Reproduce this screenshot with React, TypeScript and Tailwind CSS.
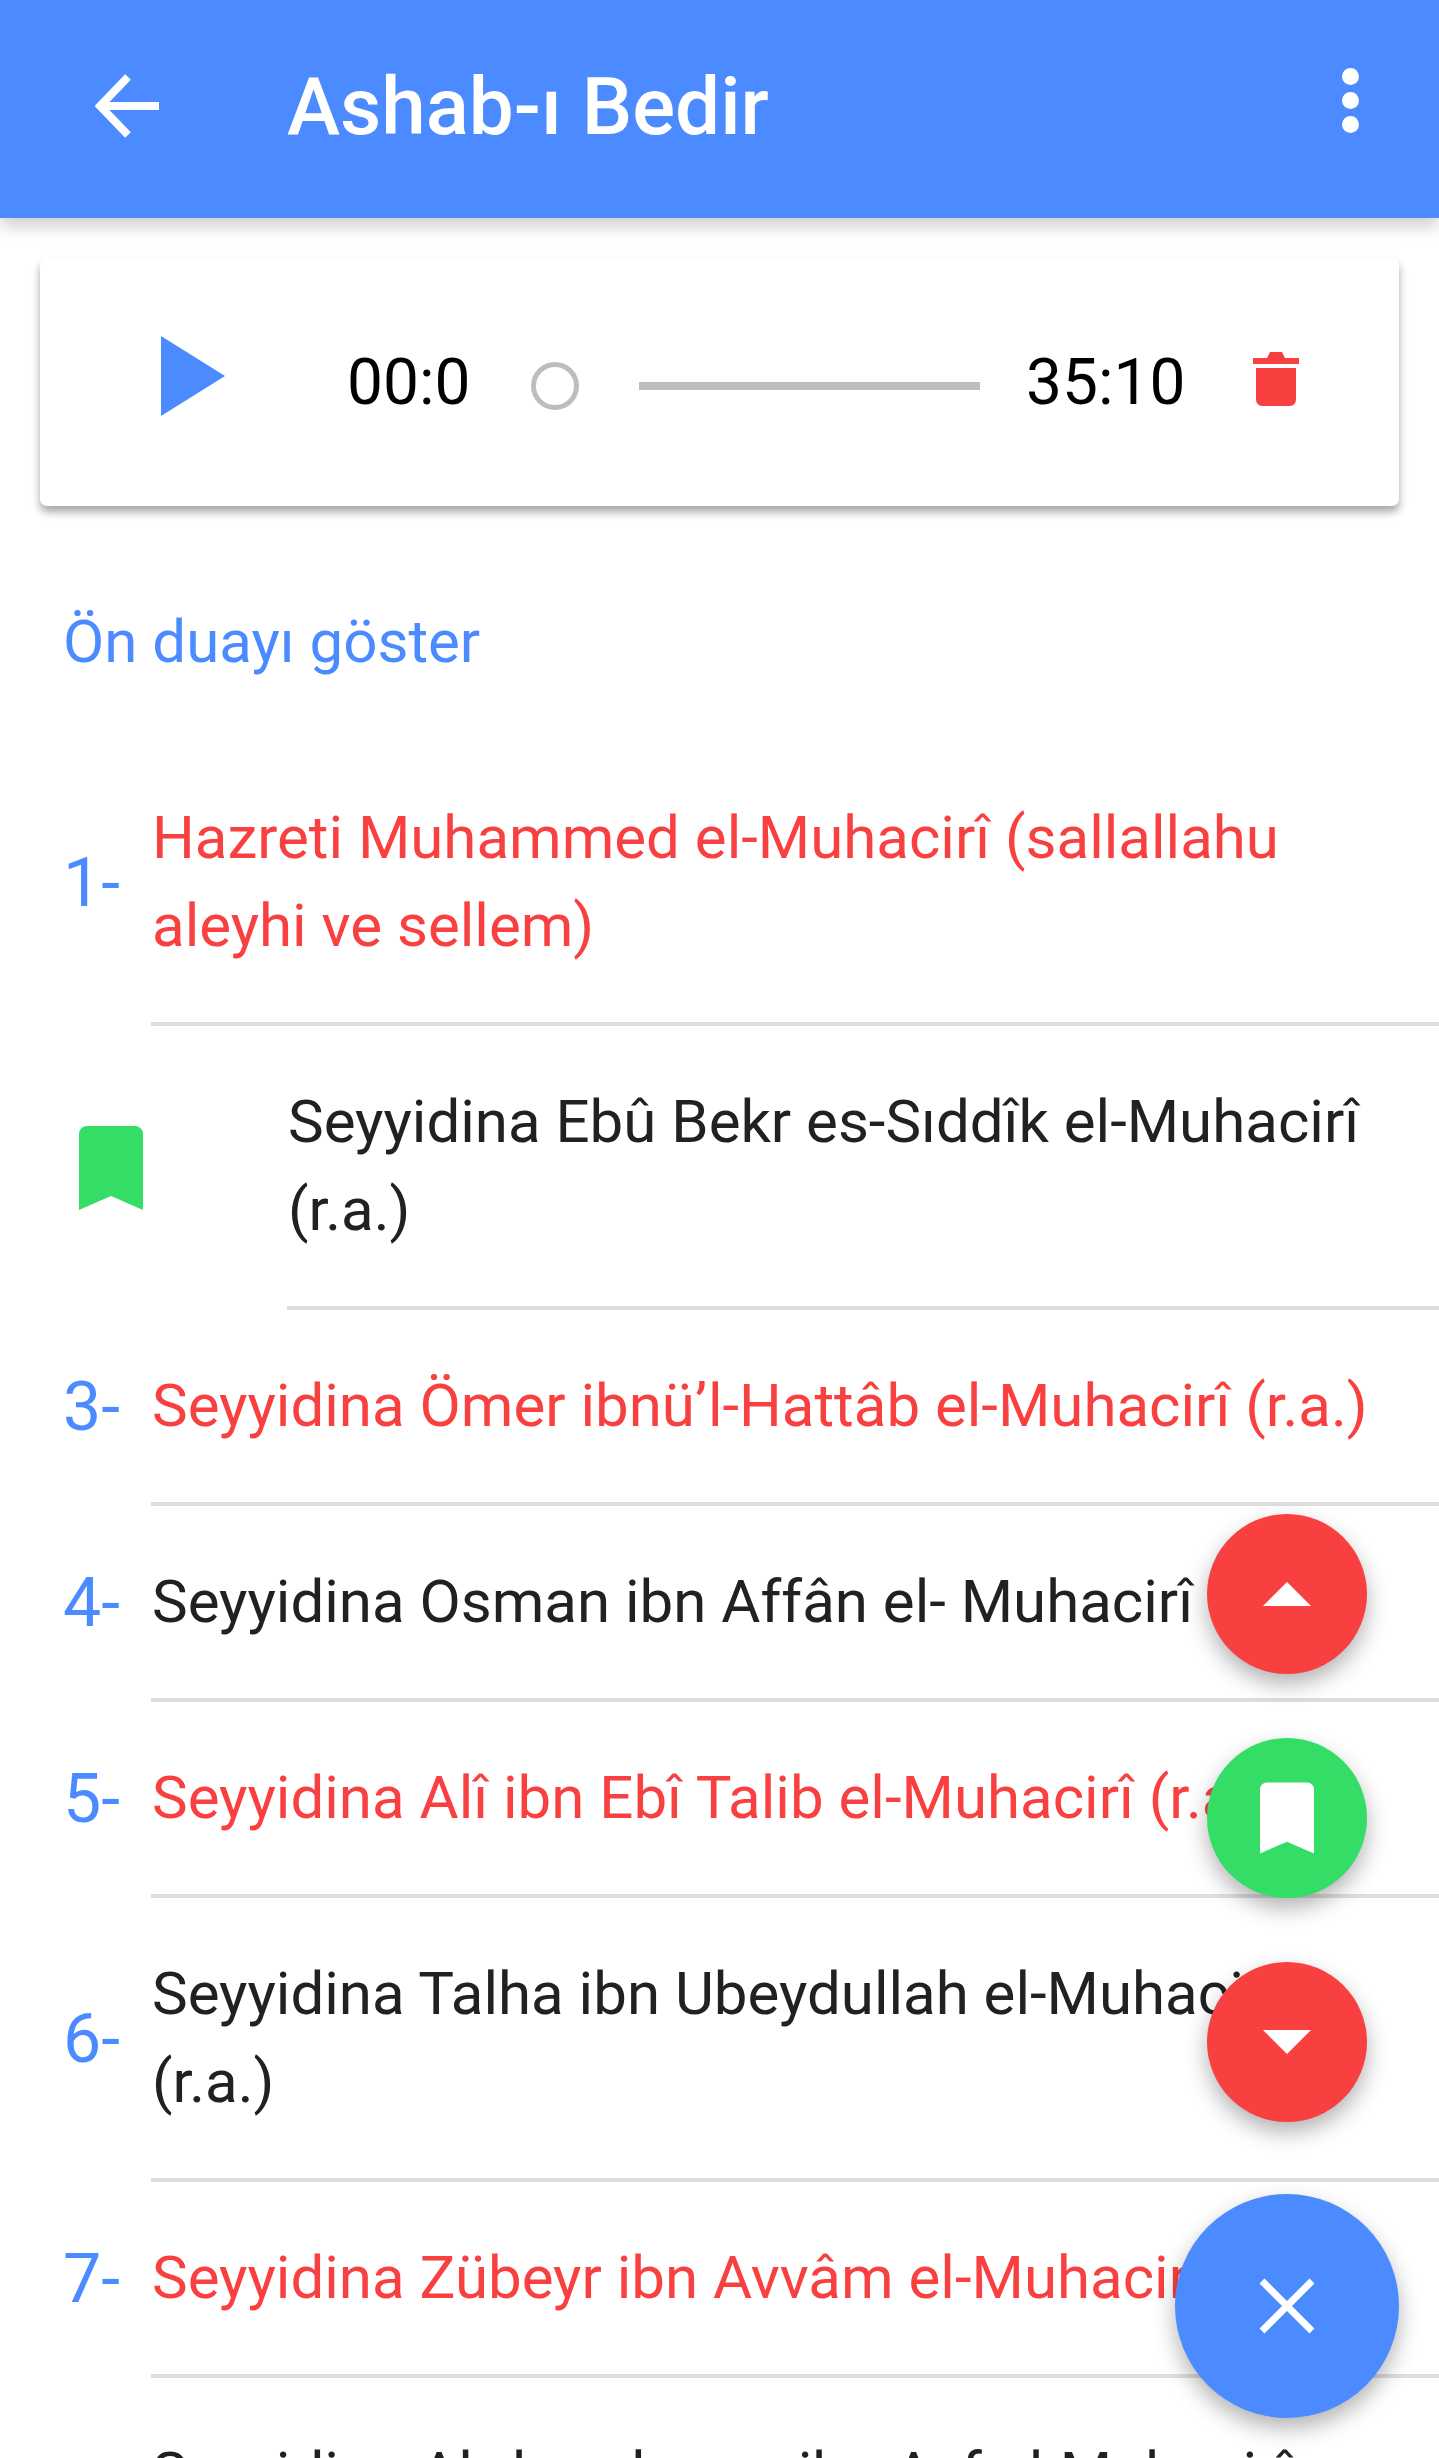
import React from 'react';

const BLUE = 'text-[#4b8bff]';

type Row = { num?: string; text: React.ReactNode; red?: boolean; saved?: boolean; two?: boolean };

const rows: Row[] = [
  { num: '1-', text: 'Hazreti Muhammed el-Muhacirî (sallallahu aleyhi ve sellem)', red: true, two: true },
  { text: 'Seyyidina Ebû Bekr es-Sıddîk el-Muhacirî (r.a.)', saved: true, two: true },
  { num: '3-', text: 'Seyyidina Ömer ibnü’l-Hattâb el-Muhacirî (r.a.)', red: true },
  { num: '4-', text: 'Seyyidina Osman ibn Affân el- Muhacirî' },
  { num: '5-', text: 'Seyyidina Alî ibn Ebî Talib el-Muhacirî (r.a.)', red: true },
  { num: '6-', text: 'Seyyidina Talha ibn Ubeydullah el-Muhacirî (r.a.)', two: true },
  { num: '7-', text: 'Seyyidina Zübeyr ibn Avvâm el-Muhacirî (r.a.)', red: true },
  { num: '8-', text: 'Seyyidina Abdurrahman ibn Avf el-Muhacirî (r.a.)', two: true },
];

const Bookmark = ({ className }: { className: string }) => (
  <svg viewBox="0 0 64 84" className={className} fill="currentColor">
    <path d="M0 84V8a8 8 0 0 1 8-8h48a8 8 0 0 1 8 8v76L32 70z" />
  </svg>
);

const ListRow = ({ row }: { row: Row }) => {
  const height = row.two ? 'h-[284px]' : 'h-[196px]';
  const color = row.red ? 'text-[#f94040]' : 'text-[#212121]';
  if (row.saved) {
    return (
      <div className={`flex ${height}`}>
        <div className="w-[287px] shrink-0 flex items-center pl-[79px]">
          <Bookmark className="w-[64px] h-[84px] text-[#33dd66]" />
        </div>
        <div className={`flex-1 flex items-center pl-[1px] pr-[56px] border-b-[4px] border-[#dedede] text-[60px] leading-[88px] ${color}`}>
          {row.text}
        </div>
      </div>
    );
  }
  return (
    <div className={`flex ${height}`}>
      <div className={`w-[151px] shrink-0 flex items-center pl-[63px] pb-[2px] text-[68px] ${BLUE}`}>{row.num}</div>
      <div className={`flex-1 flex items-center pl-[1px] pr-[56px] border-b-[4px] border-[#dedede] text-[60px] leading-[88px] ${color}`}>
        {row.text}
      </div>
    </div>
  );
};

const Fab = ({ className, children }: { className: string; children: React.ReactNode }) => (
  <div className={`absolute rounded-full flex items-center justify-center shadow-[0_10px_22px_rgba(0,0,0,0.3)] ${className}`}>
    {children}
  </div>
);

export default function App() {
  return (
    <div className="relative w-[1439px] h-[2458px] overflow-hidden bg-white font-['Roboto',sans-serif]">
      <header className="relative z-10 h-[218px] bg-[#4b8bff] flex items-center text-white shadow-[0_8px_16px_rgba(0,0,0,0.2)]">
        <svg viewBox="0 0 64 64" className="ml-[95px] -mt-[6px] w-[64px] h-[64px]" fill="none" stroke="currentColor" strokeWidth="8" strokeLinecap="butt">
          <path d="M4 32h60M33 3 5 32l28 29" />
        </svg>
        <h1 className="ml-[128px] -mt-[4px] text-[80px] font-medium leading-none">Ashab-ı Bedir</h1>
        <div className="ml-auto mr-[80px] -mt-[18px] flex flex-col gap-[7px]">
          <span className="w-[17px] h-[17px] rounded-full bg-white" />
          <span className="w-[17px] h-[17px] rounded-full bg-white" />
          <span className="w-[17px] h-[17px] rounded-full bg-white" />
        </div>
      </header>

      <section className="mx-[40px] mt-[40px] h-[248px] rounded-[7px] bg-white flex items-center shadow-[0_6px_9px_rgba(0,0,0,0.35)] text-[64px] text-black">
        <svg viewBox="0 0 64 80" className="ml-[121px] -mt-[12px] w-[64px] h-[80px] text-[#4b8bff]" fill="currentColor">
          <path d="M0 0l64 40L0 80z" />
        </svg>
        <span className="ml-[122px] mt-[2px] w-[184px] shrink-0">00:0</span>
        <span className="mt-[8px] w-[48px] h-[48px] shrink-0 rounded-full border-[5px] border-[#bdbdbd]" />
        <span className="ml-[60px] mt-[8px] w-[341px] h-[8px] shrink-0 bg-[#bdbdbd]" />
        <span className="ml-[46px] mt-[2px] w-[227px] shrink-0">35:10</span>
        <svg viewBox="0 0 46 54" className="-mt-[7px] w-[46px] h-[54px] text-[#f94040]" fill="currentColor">
          <path d="M0 6h14l3-6h12l3 6h14v6H0zM3 16h40v32a6 6 0 0 1-6 6H9a6 6 0 0 1-6-6z" />
        </svg>
      </section>

      <div className={`h-[236px] flex items-center pl-[63px] pt-[36px] text-[60px] ${BLUE}`}>Ön duayı göster</div>

      <div>
        {rows.map((row, i) => (
          <ListRow key={i} row={row} />
        ))}
      </div>

      <Fab className="left-[1207px] top-[1514px] w-[160px] h-[160px] bg-[#f94040]">
        <svg viewBox="0 0 48 24" className="w-[48px] h-[24px]" fill="white"><path d="M0 24 24 0l24 24z" /></svg>
      </Fab>
      <Fab className="left-[1207px] top-[1738px] w-[160px] h-[160px] bg-[#33dd66]">
        <Bookmark className="w-[54px] h-[72px] text-white" />
      </Fab>
      <Fab className="left-[1207px] top-[1962px] w-[160px] h-[160px] bg-[#f94040]">
        <svg viewBox="0 0 48 24" className="w-[48px] h-[24px]" fill="white"><path d="M0 0h48L24 24z" /></svg>
      </Fab>
      <Fab className="left-[1175px] top-[2194px] w-[224px] h-[224px] bg-[#4b8bff]">
        <svg viewBox="0 0 56 56" className="w-[56px] h-[56px]" fill="none" stroke="white" strokeWidth="7">
          <path d="M3 3l50 50M53 3 3 53" />
        </svg>
      </Fab>
    </div>
  );
}
